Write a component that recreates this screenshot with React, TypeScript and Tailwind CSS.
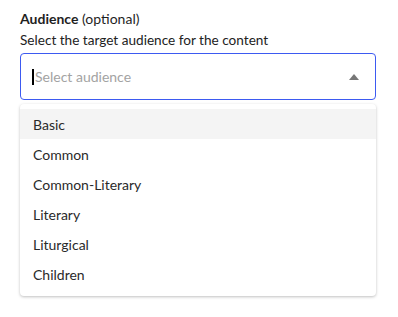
import React from 'react';

const options = ['Basic', 'Common', 'Common-Literary', 'Literary', 'Liturgical', 'Children'];

const App: React.FC = () => {
  return (
    <div className="w-[398px] h-[317px] bg-white font-['Lato',sans-serif] text-[#1f1f1f]">
      <div className="pl-5 pr-[22px] pt-[10px]">
        {/* Label */}
        <div className="text-[14px] leading-[18px]">
          <span className="font-bold">Audience</span> <span>(optional)</span>
        </div>
        <div className="mt-[4px] text-[13.6px] leading-[16px] text-[#222]">Select the target audience for the content</div>

        {/* Select input */}
        <div className="relative mt-[5px] h-[47px] rounded-[4px] border border-[#3d5af1] flex items-center pl-[11px] pr-4">
          <span className="w-[2px] h-[16px] bg-black mr-[1px]" />
          <span className="text-[14px] text-[#a3a3a3]">Select audience</span>
          <span className="ml-auto w-0 h-0 border-l-[5px] border-r-[5px] border-b-[6px] border-l-transparent border-r-transparent border-b-[#777]" />
        </div>

        {/* Menu */}
        <div className="relative mt-[4px] rounded-[4px] bg-white shadow-[0_1px_3px_rgba(0,0,0,0.25)] pt-[5px] pb-[7px]">
          {options.map((o, i) => (
            <div
              key={o}
              className={`h-[30px] flex items-center pl-[13px] text-[14px] text-[#2a2a2a] ${i === 0 ? 'bg-[#f4f4f4]' : ''}`}
            >
              {o}
            </div>
          ))}
        </div>
      </div>
    </div>
  );
};

export default App;
